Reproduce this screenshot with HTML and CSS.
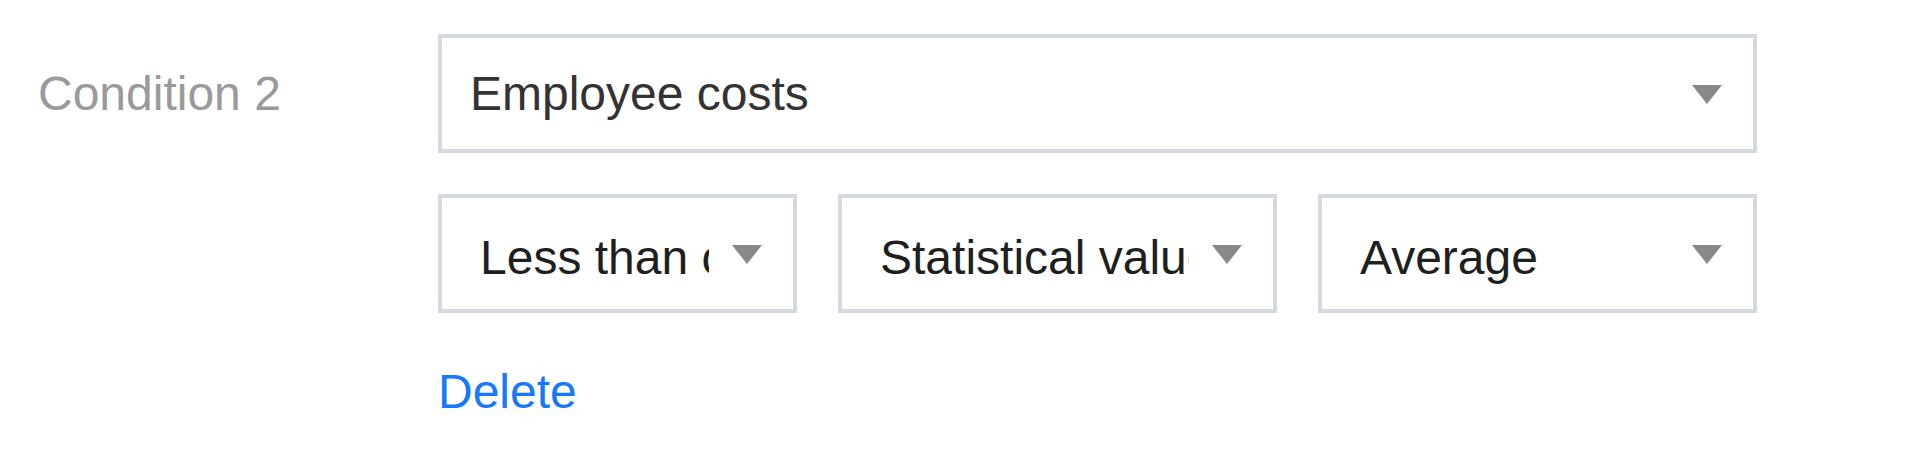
FILE: index.html
```html
<!DOCTYPE html>
<html lang="en">
<head>
<meta charset="utf-8">
<title>Condition</title>
<link rel="stylesheet" href="styles.css">
</head>
<body>
<div class="condition">
  <div class="label">Condition 2</div>
  <div class="select select-main">
    <span class="value">Employee costs</span>
    <span class="arrow"></span>
  </div>
  <div class="spacer"></div>
  <div class="sub-row">
    <div class="select select-small select-op">
      <span class="value">Less than or equal to</span>
      <span class="arrow"></span>
    </div>
    <div class="select select-small select-wide">
      <span class="value">Statistical value</span>
      <span class="arrow"></span>
    </div>
    <div class="select select-small select-wide">
      <span class="value">Average</span>
      <span class="arrow"></span>
    </div>
  </div>
  <div class="spacer"></div>
  <a class="delete" href="#">Delete</a>
</div>
</body>
</html>
```
FILE: styles.css
```css
html, body {
  margin: 0;
  padding: 0;
  background: #ffffff;
}

body {
  font-family: "Liberation Sans", Arial, Helvetica, sans-serif;
  font-size: 48px;
}

.condition {
  display: grid;
  grid-template-columns: 438px 1319px;
  row-gap: 41px;
  padding-top: 34px;
}

.label {
  align-self: center;
  padding-left: 38px;
  color: #9a9a9a;
  white-space: nowrap;
}

.select {
  box-sizing: border-box;
  height: 119px;
  border: 4px solid #d2d9e3;
  background: #ffffff;
  display: flex;
  align-items: center;
}

.select-main {
  padding: 0 31px 0 28px;
  color: #333333;
}

.select-small {
  padding: 0 31px 0 38px;
  color: #1f1f1f;
}

.value {
  flex: 1;
  min-width: 0;
  overflow: hidden;
  white-space: nowrap;
}

.select-small .value {
  padding-top: 7px;
}

.arrow {
  flex: none;
  width: 0;
  height: 0;
  margin-left: 23px;
  border-left: 15px solid transparent;
  border-right: 15px solid transparent;
  border-top: 19px solid #888888;
  margin-top: 2px;
}

.sub-row {
  display: flex;
  gap: 41px;
}

.select-op {
  width: 359px;
  flex: none;
}

.select-wide {
  width: 439px;
  flex: none;
}

.delete {
  justify-self: start;
  margin-top: 14px;
  line-height: 48px;
  color: #1677ff;
  text-decoration: none;
}
```
